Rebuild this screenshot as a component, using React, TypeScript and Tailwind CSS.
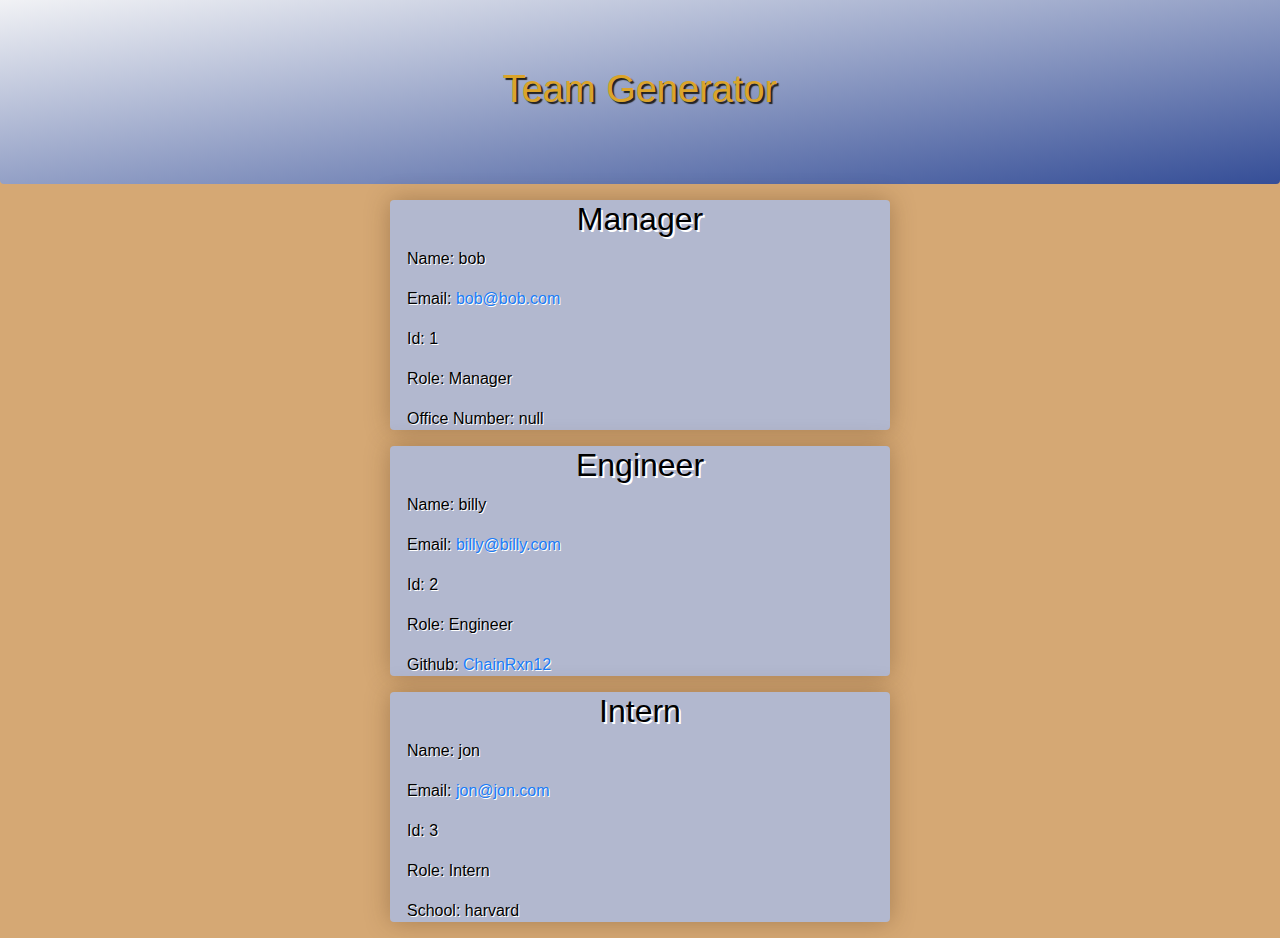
const team = [
  {
    title: 'Manager',
    rows: [
      { label: 'Name', value: 'bob' },
      { label: 'Email', value: 'bob@bob.com', link: true },
      { label: 'Id', value: '1' },
      { label: 'Role', value: 'Manager' },
      { label: 'Office Number', value: 'null' },
    ],
  },
  {
    title: 'Engineer',
    rows: [
      { label: 'Name', value: 'billy' },
      { label: 'Email', value: 'billy@billy.com', link: true },
      { label: 'Id', value: '2' },
      { label: 'Role', value: 'Engineer' },
      { label: 'Github', value: 'ChainRxn12', link: true },
    ],
  },
  {
    title: 'Intern',
    rows: [
      { label: 'Name', value: 'jon' },
      { label: 'Email', value: 'jon@jon.com', link: true },
      { label: 'Id', value: '3' },
      { label: 'Role', value: 'Intern' },
      { label: 'School', value: 'harvard' },
    ],
  },
]

export default function App() {
  return (
    <main className="min-h-[938px] bg-[#d5a874] font-['Liberation_Sans',Arial,sans-serif] text-black">
      {/* Header */}
      <header className="h-[184px] rounded-b-[4px] bg-[linear-gradient(to_bottom_right,#f1f2f5,#354e97)] flex justify-center pt-[65px]">
        <h1 className="text-[38px] leading-[48px] text-[#dba42a] [text-shadow:2px_2px_1px_#222]">Team Generator</h1>
      </header>

      {/* Cards */}
      <section className="flex flex-col items-center gap-4 pt-4 pb-4">
        {team.map((member) => (
          <div
            key={member.title}
            className="w-[500px] h-[230px] overflow-hidden rounded-[4px] bg-[#b2b8cf] shadow-[0_0_24px_rgba(80,50,20,0.35)]"
          >
            <h2 className="text-center text-[32px] leading-[38px] [text-shadow:2px_2px_0_#fff]">{member.title}</h2>
            <div className="flex flex-col gap-4 pt-[9px] pl-[17px] text-base leading-6 [text-shadow:1px_1px_0_#fff]">
              {member.rows.map((row) => (
                <p key={row.label}>
                  {row.label}:{' '}
                  {row.link ? <a className="text-[#1a7cf5]">{row.value}</a> : row.value}
                </p>
              ))}
            </div>
          </div>
        ))}
      </section>
    </main>
  )
}
